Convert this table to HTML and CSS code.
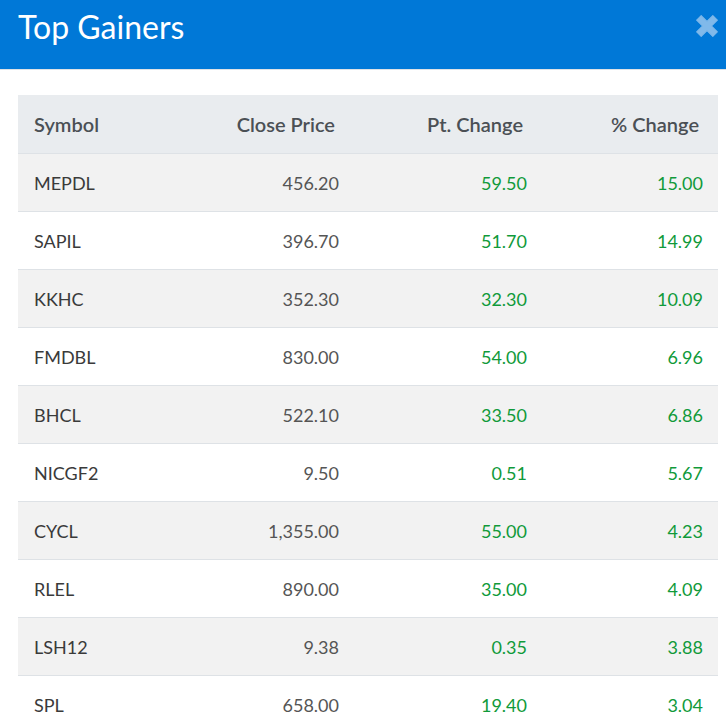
FILE: index.html
```html
<!DOCTYPE html>
<html lang="en">
<head>
<meta charset="utf-8">
<title>Top Gainers</title>
<link rel="stylesheet" href="styles.css">
</head>
<body>
<div class="modal">
  <header class="modal-header">
    <h1 class="modal-title">Top Gainers</h1>
    <button class="close-btn" aria-label="Close">
      <svg viewBox="3.5 3.5 17 17" width="22" height="22"><path d="M4 7.5 7.5 4 12 8.5 16.5 4 20 7.5 15.5 12 20 16.5 16.5 20 12 15.5 7.5 20 4 16.5 8.5 12Z" fill="currentColor" stroke="currentColor" stroke-width="0.8" stroke-linejoin="round"/></svg>
    </button>
  </header>
  <div class="modal-body">
    <table class="gainers">
      <colgroup>
        <col class="col-sym"><col class="col-price"><col class="col-pt"><col class="col-pct">
      </colgroup>
      <thead>
        <tr><th class="c-sym">Symbol</th><th class="c-num">Close Price</th><th class="c-num">Pt. Change</th><th class="c-num">% Change</th></tr>
      </thead>
      <tbody>
        <tr><td class="c-sym">MEPDL</td><td class="c-num price">456.20</td><td class="c-num up">59.50</td><td class="c-num up">15.00</td></tr>
        <tr><td class="c-sym">SAPIL</td><td class="c-num price">396.70</td><td class="c-num up">51.70</td><td class="c-num up">14.99</td></tr>
        <tr><td class="c-sym">KKHC</td><td class="c-num price">352.30</td><td class="c-num up">32.30</td><td class="c-num up">10.09</td></tr>
        <tr><td class="c-sym">FMDBL</td><td class="c-num price">830.00</td><td class="c-num up">54.00</td><td class="c-num up">6.96</td></tr>
        <tr><td class="c-sym">BHCL</td><td class="c-num price">522.10</td><td class="c-num up">33.50</td><td class="c-num up">6.86</td></tr>
        <tr><td class="c-sym">NICGF2</td><td class="c-num price">9.50</td><td class="c-num up">0.51</td><td class="c-num up">5.67</td></tr>
        <tr><td class="c-sym">CYCL</td><td class="c-num price">1,355.00</td><td class="c-num up">55.00</td><td class="c-num up">4.23</td></tr>
        <tr><td class="c-sym">RLEL</td><td class="c-num price">890.00</td><td class="c-num up">35.00</td><td class="c-num up">4.09</td></tr>
        <tr><td class="c-sym">LSH12</td><td class="c-num price">9.38</td><td class="c-num up">0.35</td><td class="c-num up">3.88</td></tr>
        <tr><td class="c-sym">SPL</td><td class="c-num price">658.00</td><td class="c-num up">19.40</td><td class="c-num up">3.04</td></tr>
      </tbody>
    </table>
  </div>
</div>
</body>
</html>
```
FILE: styles.css
```css
html, body {
  margin: 0;
  padding: 0;
  background: #ffffff;
  font-family: "Lato", "Noto Sans", sans-serif;
}

.modal {
  width: 726px;
  overflow: hidden;
}

.modal-header {
  height: 69px;
  background: #0078d7;
  border-bottom: 1px solid #dee2e6;
  display: flex;
  align-items: flex-start;
  justify-content: space-between;
  padding: 0 0 0 18px;
}

.modal-title {
  margin: 11px 0 0 0;
  color: #ffffff;
  font-size: 32px;
  font-weight: 400;
  line-height: 32px;
}

.close-btn {
  background: none;
  border: 0;
  padding: 0;
  margin: 15px 8px 0 0;
  width: 22px;
  height: 22px;
  color: #80b9ea;
  display: flex;
  align-items: center;
  justify-content: center;
}

.modal-body {
  padding: 25px 8px 0 18px;
}

.gainers {
  width: 700px;
  table-layout: fixed;
  border-collapse: collapse;
  font-size: 18px;
}

.col-sym { width: 180px; }
.col-price { width: 156px; }
.col-pt { width: 188px; }
.col-pct { width: 176px; }

.gainers th,
.gainers td {
  height: 57px;
  padding: 0 15px 0 16px;
  border-top: 1px solid #dee2e6;
  vertical-align: middle;
  white-space: nowrap;
}

.gainers thead th {
  background: #e9ecef;
  color: #4b5055;
  font-size: 20px;
  font-weight: 600;
  border-top: 0;
  height: 58px;
}

.gainers th.c-num {
  padding-right: 19px;
}

.gainers td {
  color: #3a3a3a;
}

.gainers tbody tr:nth-child(odd) td {
  background: #f2f2f2;
}

.c-sym { text-align: left; }
.c-num { text-align: right; }

.gainers td.price { color: #555555; }
.gainers td.up { color: #109a3a; }
```
